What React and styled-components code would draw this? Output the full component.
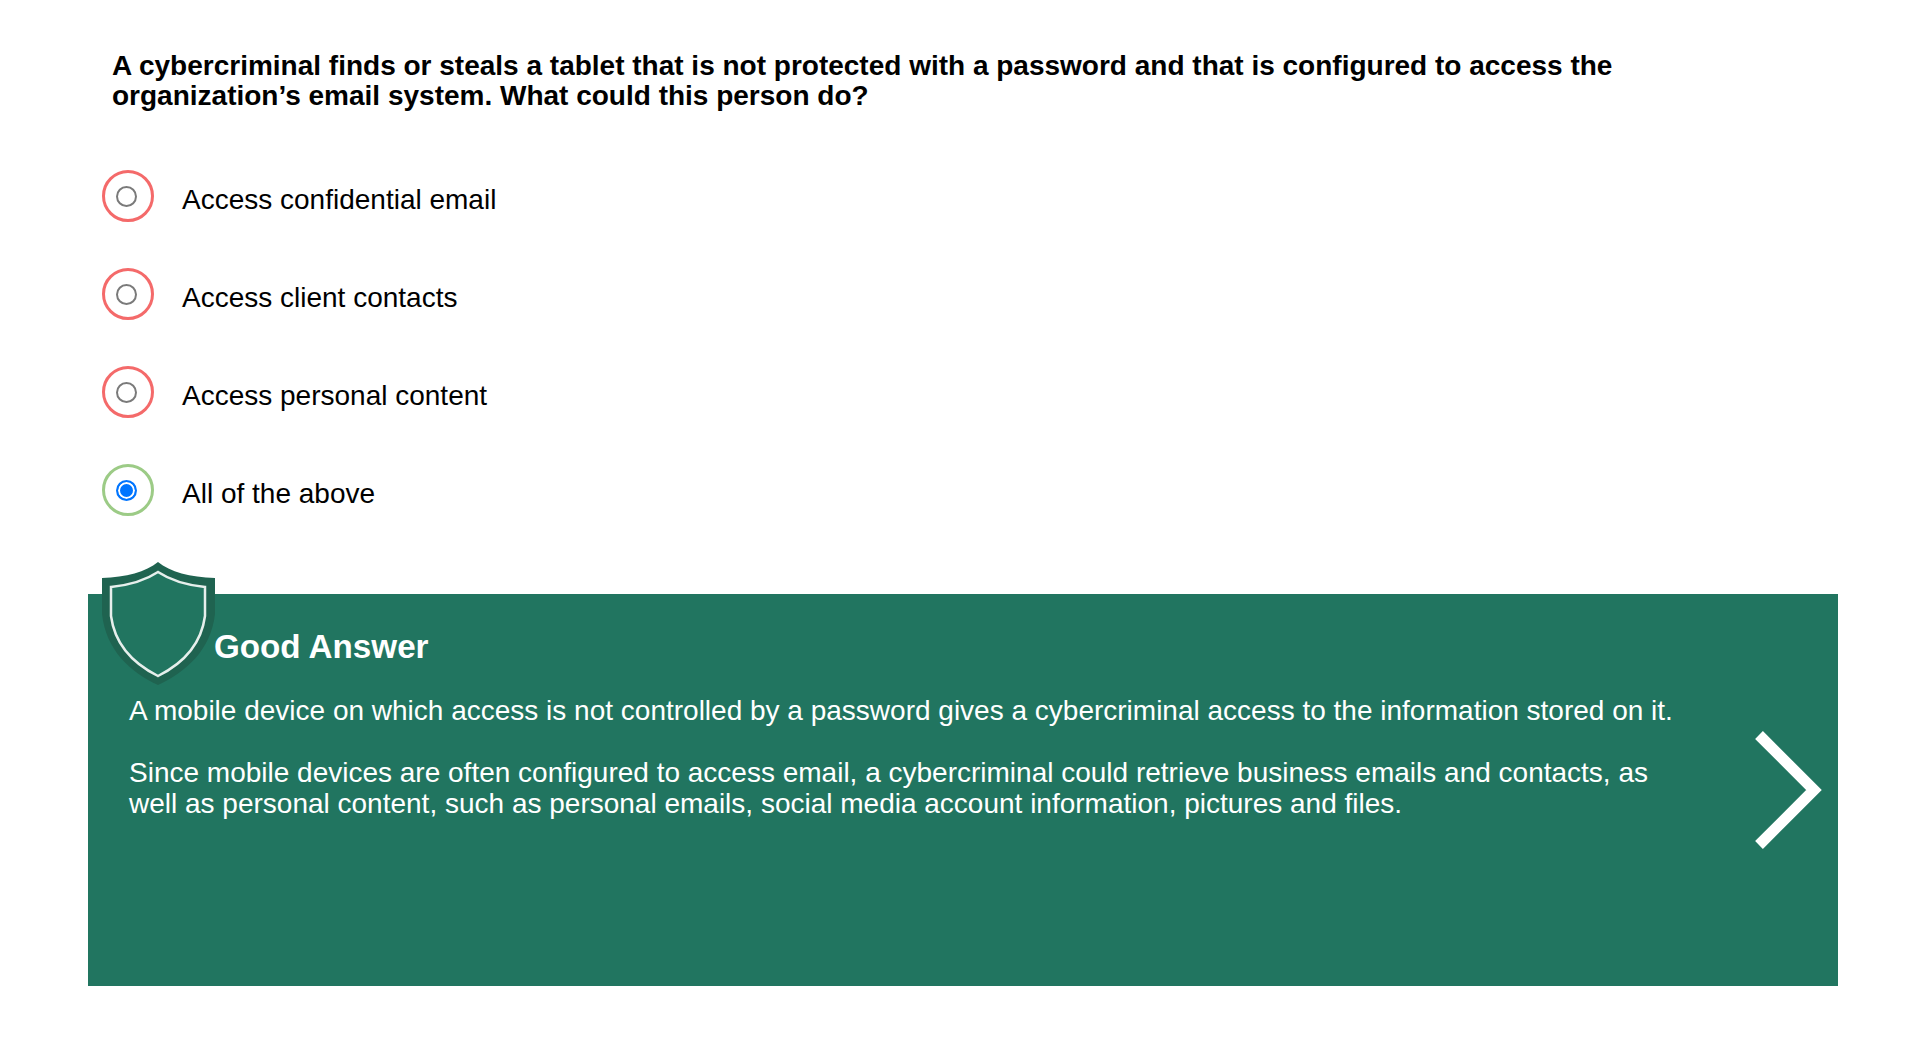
import * as React from 'react';
import styled, { createGlobalStyle } from 'styled-components';

const GlobalStyle = createGlobalStyle`
  html, body {
    margin: 0;
    padding: 0;
    background: #fff;
    font-family: "Liberation Sans", Arial, sans-serif;
    color: #000;
  }
`;

const OPTIONS = [
  { label: 'Access confidential email', correct: false },
  { label: 'Access client contacts', correct: false },
  { label: 'Access personal content', correct: false },
  { label: 'All of the above', correct: true },
];

const Shield = () => (
  <ShieldSvg viewBox="0 0 113 124">
    <path
      d="M56 0 C44 10 24 15 0 16 L0 52 C4 88 28 110 56 123 C84 110 109 88 113 52 L113 16 C88 15 68 10 56 0 Z"
      fill="#1f6350"
    />
    <path
      d="M56 10 C44 18 28 23 9 25 L9 54 C13 84 32 102 56 114 C80 102 99 84 103 54 L103 25 C84 23 68 18 56 10 Z"
      fill="#217560"
      stroke="#e6efec"
      strokeWidth="2.5"
    />
  </ShieldSvg>
);

const Chevron = () => (
  <ChevronSvg viewBox="0 0 68 120">
    <path d="M5 5 L60 60 L5 115" fill="none" stroke="#fff" strokeWidth="11" />
  </ChevronSvg>
);

const App = () => (
  <Page>
    <GlobalStyle />
    <Question>
      A cybercriminal finds or steals a tablet that is not protected with a password and that is configured to access the organization’s email system. What could this person do?
    </Question>
    <OptionList>
      {OPTIONS.map((option) => (
        <Option key={option.label}>
          <Ring $correct={option.correct}>
            <Radio $checked={option.correct} />
          </Ring>
          <OptionLabel>{option.label}</OptionLabel>
        </Option>
      ))}
    </OptionList>
    <Feedback>
      <Shield />
      <FeedbackTitle>Good Answer</FeedbackTitle>
      <FeedbackRow>
        <FeedbackBody>
          <p>A mobile device on which access is not controlled by a password gives a cybercriminal access to the information stored on it.</p>
          <p>Since mobile devices are often configured to access email, a cybercriminal could retrieve business emails and contacts, as well as personal content, such as personal emails, social media account information, pictures and files.</p>
        </FeedbackBody>
        <Chevron />
      </FeedbackRow>
    </Feedback>
  </Page>
);

const Page = styled.div`
  width: 1906px;
  height: 1044px;
  overflow: hidden;
  padding-top: 51px;
  box-sizing: border-box;
`;

const Question = styled.h1`
  margin: 0 0 0 112px;
  width: 1540px;
  font-size: 28px;
  line-height: 30px;
  font-weight: bold;
`;

const OptionList = styled.div`
  display: flex;
  flex-direction: column;
  gap: 46px;
  margin: 59px 0 0 102px;
`;

const Option = styled.div`
  display: flex;
  align-items: center;
  height: 52px;
`;

const Ring = styled.div`
  display: flex;
  align-items: center;
  justify-content: center;
  box-sizing: border-box;
  width: 52px;
  height: 52px;
  padding: 0 3px 0 0;
  border-radius: 50%;
  border: 3px solid ${(props) => (props.$correct ? '#9ccb86' : '#f46a6a')};
`;

const Radio = styled.span`
  display: block;
  box-sizing: border-box;
  width: 21px;
  height: 21px;
  border-radius: 50%;
  border: 2px solid ${(props) => (props.$checked ? '#0075ff' : '#7a7a7a')};
  background: ${(props) => (props.$checked ? '#0075ff' : '#fff')};
  box-shadow: ${(props) => (props.$checked ? 'inset 0 0 0 2px #fff' : 'none')};
`;

const OptionLabel = styled.span`
  margin-left: 28px;
  padding-top: 8px;
  font-size: 28px;
  line-height: 32px;
`;

const Feedback = styled.section`
  position: relative;
  box-sizing: border-box;
  width: 1750px;
  height: 392px;
  margin: 78px 0 0 88px;
  padding: 32px 0 0 41px;
  background: #217560;
  color: #fff;
`;

const ShieldSvg = styled.svg`
  position: absolute;
  left: 14px;
  top: -32px;
  width: 113px;
  height: 124px;
`;

const FeedbackTitle = styled.h2`
  margin: 0 0 0 85px;
  font-size: 33.2px;
  line-height: 42px;
  font-weight: bold;
`;

const FeedbackRow = styled.div`
  display: flex;
  align-items: flex-start;
`;

const FeedbackBody = styled.div`
  width: 1560px;
  margin-top: 27px;
  font-size: 28px;
  line-height: 31px;

  p {
    margin: 0 0 31px;
  }
`;

const ChevronSvg = styled.svg`
  width: 68px;
  height: 120px;
  flex: none;
  margin: 62px 0 0 65px;
`;

export default App;
